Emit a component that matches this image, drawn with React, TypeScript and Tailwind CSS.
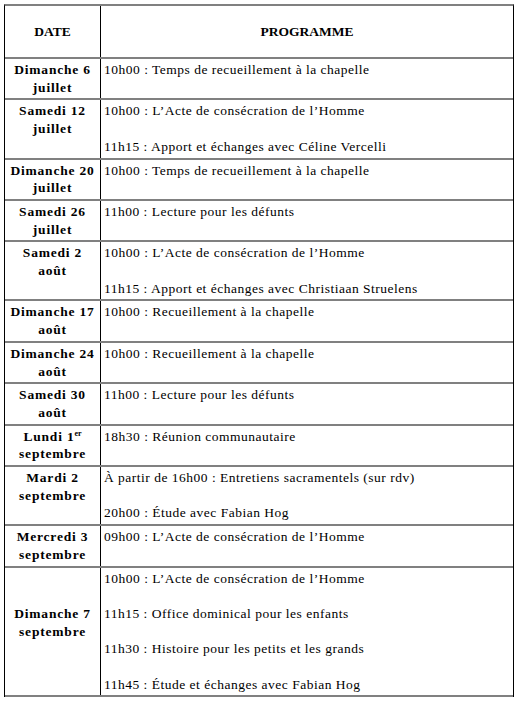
import React from 'react';

type Row = {
  date: React.ReactNode;
  items: string[];
  dateOffset?: boolean;
};

const rows: Row[] = [
  { date: <>Dimanche 6<br />juillet</>, items: ['10h00 : Temps de recueillement à la chapelle'] },
  {
    date: <>Samedi 12<br />juillet</>,
    items: ['10h00 : L’Acte de consécration de l’Homme', '11h15 : Apport et échanges avec Céline Vercelli'],
  },
  { date: <>Dimanche 20<br />juillet</>, items: ['10h00 : Temps de recueillement à la chapelle'] },
  { date: <>Samedi 26<br />juillet</>, items: ['11h00 : Lecture pour les défunts'] },
  {
    date: <>Samedi 2<br />août</>,
    items: ['10h00 : L’Acte de consécration de l’Homme', '11h15 : Apport et échanges avec Christiaan Struelens'],
  },
  { date: <>Dimanche 17<br />août</>, items: ['10h00 : Recueillement à la chapelle'] },
  { date: <>Dimanche 24<br />août</>, items: ['10h00 : Recueillement à la chapelle'] },
  { date: <>Samedi 30<br />août</>, items: ['11h00 : Lecture pour les défunts'] },
  {
    date: (
      <>
        Lundi 1<span className="relative -top-[5px] text-[8px] leading-none tracking-normal">er</span>
        <br />
        septembre
      </>
    ),
    items: ['18h30 : Réunion communautaire'],
  },
  {
    date: <>Mardi 2<br />septembre</>,
    items: ['À partir de 16h00 : Entretiens sacramentels (sur rdv)', '20h00 : Étude avec Fabian Hog'],
  },
  { date: <>Mercredi 3<br />septembre</>, items: ['09h00 : L’Acte de consécration de l’Homme'] },
  {
    date: <>Dimanche 7<br />septembre</>,
    dateOffset: true,
    items: [
      '10h00 : L’Acte de consécration de l’Homme',
      '11h15 : Office dominical pour les enfants',
      '11h30 : Histoire pour les petits et les grands',
      '11h45 : Étude et échanges avec Fabian Hog',
    ],
  },
];

function ScheduleRow({ date, items, dateOffset }: Row) {
  return (
    <div className="grid grid-cols-[96px_1fr] border-b-2 border-[#808080]">
      <div className="border-r border-black py-[2px] text-center font-bold tracking-[0.8px]">
        <div className={dateOffset ? 'mt-[35.4px]' : ''}>{date}</div>
      </div>
      <div className="flex flex-col gap-[17.7px] py-[2px] pl-[3px] tracking-[0.5px]">
        {items.map(item => (
          <div key={item} className="whitespace-nowrap">{item}</div>
        ))}
      </div>
    </div>
  );
}

export default function App() {
  return (
    <div className="min-h-screen bg-white pl-[4px] pt-[4px] text-black">
      <div className="w-[510px] border-x border-t-2 border-x-black border-t-[#808080] font-['Liberation_Serif',serif] text-[13.5px] leading-[17.7px]">
        <div className="grid h-[53px] grid-cols-[96px_1fr] border-b-2 border-[#808080] font-bold">
          <div className="flex items-center justify-center border-r border-black">DATE</div>
          <div className="flex items-center justify-center">PROGRAMME</div>
        </div>
        {rows.map((row, i) => (
          <ScheduleRow key={i} {...row} />
        ))}
      </div>
    </div>
  );
}
